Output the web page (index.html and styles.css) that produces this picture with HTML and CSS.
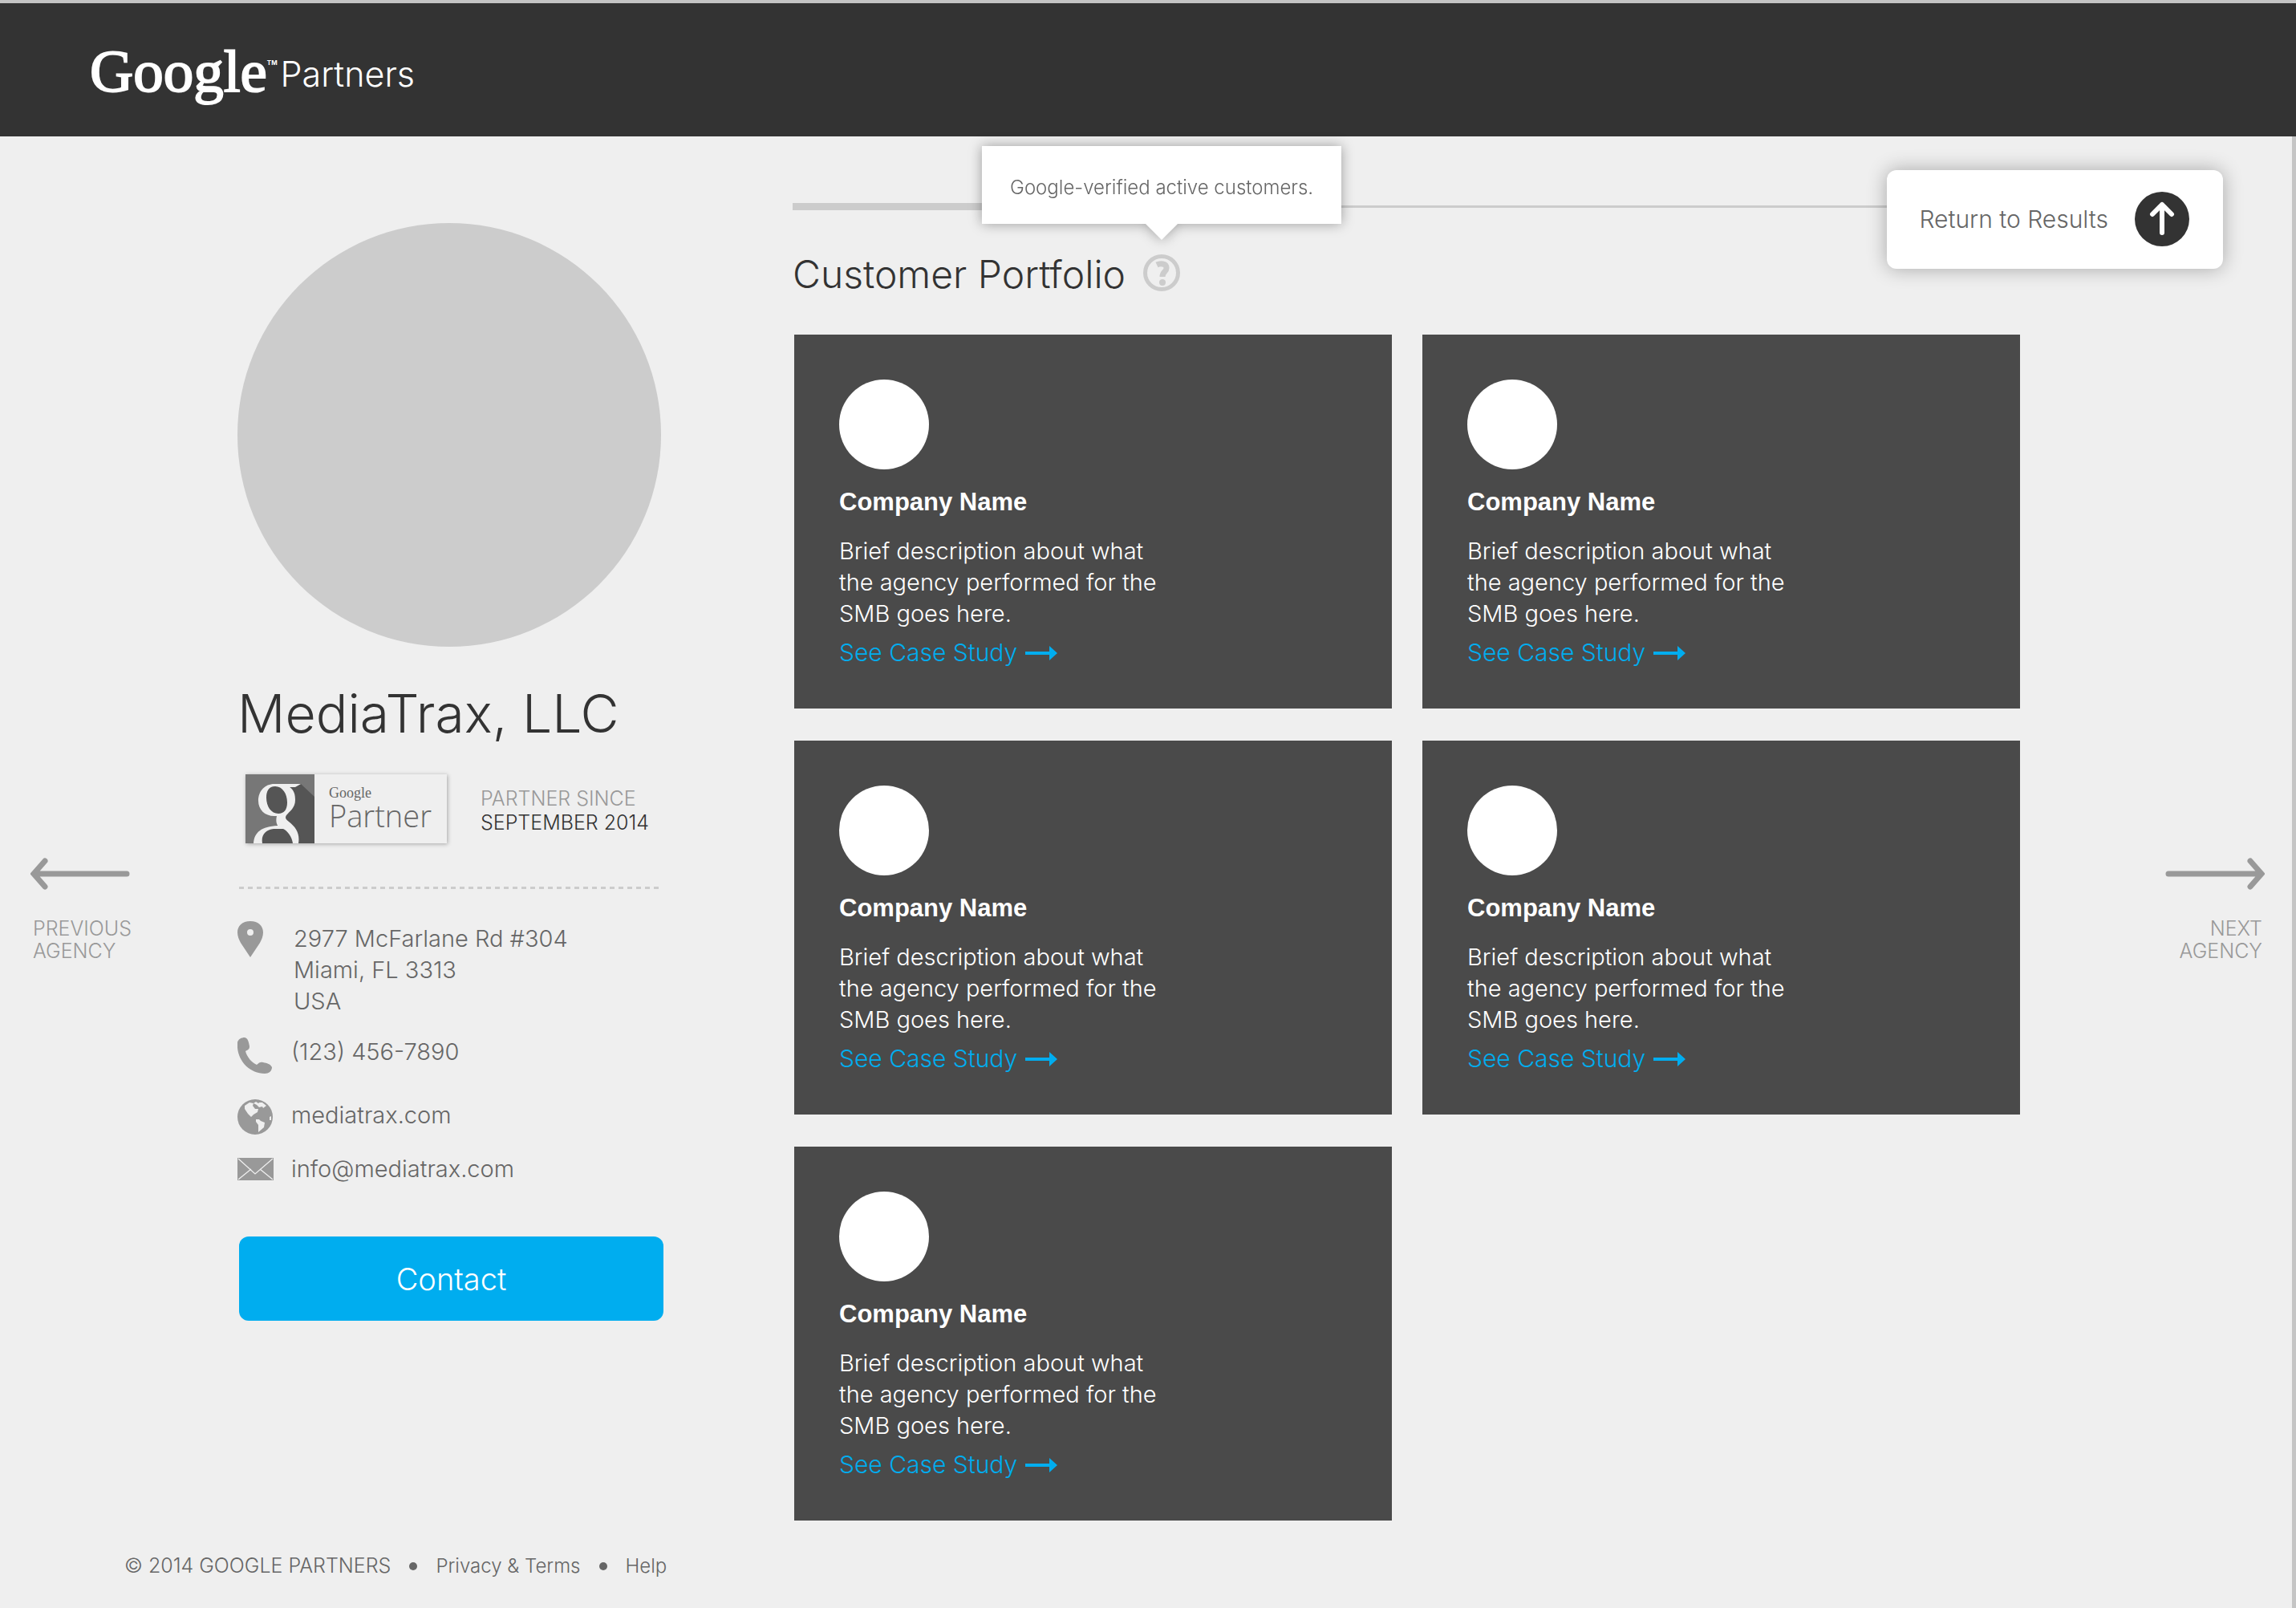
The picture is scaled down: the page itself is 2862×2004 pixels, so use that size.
FILE: index.html
```html
<!DOCTYPE html>
<html lang="en">
<head>
<meta charset="utf-8">
<title>MediaTrax, LLC - Google Partners</title>
<link rel="stylesheet" href="styles.css">
</head>
<body>
<header class="topbar">
  <a class="brand" href="#"><span class="brand-google">Google</span><span class="brand-tm">TM</span><span class="brand-partners">Partners</span></a>
</header>
<div class="page">
  <main class="layout">
    <a class="pager pager-prev" href="#">
      <svg class="pager-arrow" viewBox="0 0 124 40"><path d="M18 4 4 20l14 16M6 20h114" fill="none" stroke="currentColor" stroke-width="7" stroke-linecap="round"/></svg>
      <span class="pager-label">PREVIOUS<br>AGENCY</span>
    </a>
    <aside class="profile">
      <div class="avatar"></div>
      <h1 class="agency">MediaTrax, LLC</h1>
      <div class="credentials">
        <div class="badge">
          <svg class="badge-mark" viewBox="0 0 86 86">
            <path d="M0 0h86v86H0z" fill="#777"/>
            <path d="M69 12 86 28v58H21c-2-12 6-18 14-18l9-10 10-20 2-22z" fill="#555"/>
            <ellipse cx="39" cy="32" rx="15" ry="19" fill="#555"/>
            <path fill-rule="evenodd" d="M36 12h33l-7 4h-7c6 4 7 10 7 16 0 10-7 14-11 19-2 3-1 5 3 8 9 7 14 15 12 27h-7c-1-8-7-16-12-18H35c-10 1-16 8-14 18H10c1-14 10-21 30-22-2-4-2-8-1-12h-3c-12 0-20-8-20-19 0-12 8-21 20-21zm1 3c-8 0-11 6-11 14 0 11 6 20 15 20 7 0 11-5 11-14 0-11-6-20-15-20z" fill="#efefef"/>
          </svg>
          <div class="badge-text"><span class="badge-google">Google</span><span class="badge-partner">Partner</span></div>
        </div>
        <p class="since"><span class="since-label">PARTNER SINCE</span><br>SEPTEMBER 2014</p>
      </div>
      <hr class="dashes">
      <ul class="contacts">
        <li class="contact contact-address">
          <svg class="icon" viewBox="0 0 45 45"><path fill-rule="evenodd" d="M16 0C6 0 0 6 0 14c0 5 2 9 4 13l12 18 12-18c2-4 4-8 4-13C32 6 26 0 16 0zm0 10a4 4 0 1 1 0 8 4 4 0 0 1 0-8z" fill="#999"/></svg>
          <address class="address">2977 McFarlane Rd #304<br>Miami, FL 3313<br>USA</address>
        </li>
        <li class="contact contact-phone">
          <svg class="icon" viewBox="0 0 45 45"><path d="M0 6C1 2 5 0 9 0c4 1 5 5 6 11 0 3-1 4-5 6 2 8 8 14 14 17 3-3 5-4 8-3 5 1 9 2 11 6 0 5-4 8-9 8C14 45-2 27 0 6z" fill="#999"/></svg>
          <a class="contact-link" href="#">(123) 456-7890</a>
        </li>
        <li class="contact contact-web">
          <svg class="icon" viewBox="0 0 45 45"><circle cx="22" cy="22" r="22" fill="#999"/><path d="M9 8l6-4 5 1-1 3 3 4h4l-1 4-5 3-3 3-4-4-4-6zM20 5l3-2 3 2 4 0 1 4-4 1-3-3zM26 4l5 0 5 4-4 3-2-4zM23 25h4l2 2 5 2-1 6-7 6 0-9-3-4zM40 22l2-1v5h-2z" fill="#efefef"/></svg>
          <a class="contact-link" href="#">mediatrax.com</a>
        </li>
        <li class="contact contact-mail">
          <svg class="icon icon-mail" viewBox="0 0 45 28"><path d="M0 0h45v28H0z" fill="#999"/><path d="M1 1l21 19L44 1M1 27l16-13M44 27 28 14" fill="none" stroke="#efefef" stroke-width="1.300"/></svg>
          <a class="contact-link" href="#">info@mediatrax.com</a>
        </li>
      </ul>
      <button class="contact-button" type="button">Contact</button>
    </aside>
    <section class="portfolio">
      <div class="rule"><div class="rule-progress"></div></div>
      <div class="portfolio-head">
        <h2 class="portfolio-title">Customer Portfolio</h2>
        <div class="help">
          <svg class="help-icon" viewBox="0 0 46 46"><circle cx="23" cy="23" r="20.500" fill="none" stroke="#ccc" stroke-width="5"/><path d="M17 13c4-2 12-2 12 4 0 5-5 4-5 11" fill="none" stroke="#ccc" stroke-width="7"/><circle cx="24" cy="35" r="4" fill="#ccc"/></svg>
          <div class="tooltip" role="tooltip">Google-verified active customers.</div>
        </div>
      </div>
      <div class="cards">
        <article class="card">
          <div class="card-logo"></div>
          <h3 class="card-name">Company Name</h3>
          <p class="card-text">Brief description about what the agency performed for the SMB goes here.</p>
          <a class="card-link" href="#">See Case Study<svg class="card-arrow" viewBox="0 0 40 18"><path d="M0 7h30V0l10 9-10 9v-7H0z" fill="currentColor"/></svg></a>
        </article>
        <article class="card">
          <div class="card-logo"></div>
          <h3 class="card-name">Company Name</h3>
          <p class="card-text">Brief description about what the agency performed for the SMB goes here.</p>
          <a class="card-link" href="#">See Case Study<svg class="card-arrow" viewBox="0 0 40 18"><path d="M0 7h30V0l10 9-10 9v-7H0z" fill="currentColor"/></svg></a>
        </article>
        <article class="card">
          <div class="card-logo"></div>
          <h3 class="card-name">Company Name</h3>
          <p class="card-text">Brief description about what the agency performed for the SMB goes here.</p>
          <a class="card-link" href="#">See Case Study<svg class="card-arrow" viewBox="0 0 40 18"><path d="M0 7h30V0l10 9-10 9v-7H0z" fill="currentColor"/></svg></a>
        </article>
        <article class="card">
          <div class="card-logo"></div>
          <h3 class="card-name">Company Name</h3>
          <p class="card-text">Brief description about what the agency performed for the SMB goes here.</p>
          <a class="card-link" href="#">See Case Study<svg class="card-arrow" viewBox="0 0 40 18"><path d="M0 7h30V0l10 9-10 9v-7H0z" fill="currentColor"/></svg></a>
        </article>
        <article class="card">
          <div class="card-logo"></div>
          <h3 class="card-name">Company Name</h3>
          <p class="card-text">Brief description about what the agency performed for the SMB goes here.</p>
          <a class="card-link" href="#">See Case Study<svg class="card-arrow" viewBox="0 0 40 18"><path d="M0 7h30V0l10 9-10 9v-7H0z" fill="currentColor"/></svg></a>
        </article>
      </div>
    </section>
    <a class="pager pager-next" href="#">
      <svg class="pager-arrow" viewBox="0 0 124 40"><path d="m106 4 14 16-14 16M118 20H4" fill="none" stroke="currentColor" stroke-width="7" stroke-linecap="round"/></svg>
      <span class="pager-label">NEXT<br>AGENCY</span>
    </a>
    <a class="return" href="#">Return to Results
      <svg class="return-icon" viewBox="0 0 68 68"><circle cx="34" cy="34" r="34" fill="#333"/><path d="M34 51V16M22 28l12-12 12 12" fill="none" stroke="#fff" stroke-width="6" stroke-linecap="round" stroke-linejoin="round"/></svg>
    </a>
  </main>
  <footer class="footer">
    <span>© 2014 GOOGLE PARTNERS</span><span class="dot"></span><a class="footer-link" href="#">Privacy &amp; Terms</a><span class="dot"></span><a class="footer-link" href="#">Help</a>
  </footer>
</div>
</body>
</html>
```
FILE: styles.css
```css
* {
  box-sizing: border-box;
}

body {
  margin: 0;
  background: #efefef;
  color: #666;
  font-family: Inter, "Liberation Sans", Arial, sans-serif;
  font-size: 29px;
  font-weight: 300;
  line-height: 39px;
}

a {
  color: inherit;
  text-decoration: none;
}

h1, h2, h3, p, ul {
  margin: 0;
  padding: 0;
  font-weight: 300;
}

svg {
  display: block;
  flex: none;
}

.topbar {
  height: 170px;
  padding: 44px 112px 0;
  border-top: 4px solid #c4c4c4;
  background: #333;
}

.brand {
  display: inline-flex;
  align-items: flex-start;
  color: #fff;
}

.brand-google {
  font-family: "Liberation Serif", serif;
  font-size: 75px;
  font-weight: 400;
  line-height: 82px;
  -webkit-text-stroke: 2px #fff;
}

.brand-tm {
  margin-top: 20px;
  font-size: 8px;
  font-weight: 700;
  line-height: 20px;
}

.brand-partners {
  margin: 19px 0 0 4px;
  font-size: 43px;
  line-height: 50px;
}

.page {
  min-height: calc(100vh - 170px);
  border-right: 5px solid #c5c5c5;
}

.layout {
  position: relative;
  display: grid;
  grid-template-columns: 258px 531px minmax(0, 1fr) 305px;
  padding: 1px 34px 0 38px;
}

.pager {
  display: flex;
  flex-direction: column;
  gap: 34px;
  margin-top: 898px;
  align-self: start;
  color: #999;
  font-size: 25px;
  line-height: 28px;
}

.pager-arrow {
  width: 124px;
  height: 40px;
}

.pager-prev .pager-label {
  padding-left: 3px;
}

.pager-next {
  align-items: flex-end;
  text-align: right;
}

.pager-next .pager-label {
  padding-right: 3px;
}

.profile {
  padding-top: 107px;
}

.avatar {
  width: 528px;
  height: 528px;
  border-radius: 50%;
  background: #ccc;
}

.agency {
  margin-top: 45px;
  color: #333;
  font-size: 66px;
  line-height: 76px;
}

.credentials {
  display: flex;
  gap: 42px;
  margin-top: 38px;
  padding-left: 10px;
}

.badge {
  display: flex;
  width: 251px;
  height: 86px;
  box-shadow: 1px 1px 5px rgba(0, 0, 0, 0.3);
}

.badge-mark {
  width: 86px;
  height: 86px;
}

.badge-text {
  display: flex;
  flex-direction: column;
  padding: 13px 0 0 18px;
}

.badge-google {
  font-family: "Liberation Serif", serif;
  font-size: 18px;
  font-weight: 400;
  line-height: 20px;
}

.badge-partner {
  font-family: "Open Sans", sans-serif;
  font-size: 38px;
  line-height: 37px;
}

.since {
  padding-top: 15px;
  color: #333;
  font-size: 25px;
  line-height: 30px;
}

.since-label {
  color: #999;
}

.dashes {
  height: 3px;
  margin: 54px 4px 0 2px;
  border: 0;
  background: repeating-linear-gradient(90deg, #ccc 0 6px, transparent 6px 11px);
}

.contacts {
  display: flex;
  flex-direction: column;
  margin-top: 40px;
  list-style: none;
}

.contact {
  display: flex;
  align-items: flex-start;
  gap: 22px;
}

.contact-address {
  gap: 25px;
}

.contact-phone {
  margin-top: 26px;
}

.contact-web {
  margin-top: 32px;
}

.contact-mail {
  align-items: center;
  margin-top: 22px;
}

.icon {
  width: 45px;
  height: 45px;
}

.icon-mail {
  height: 28px;
}

.address {
  padding-top: 2px;
  font-style: normal;
}

.contact-phone {
  line-height: 36px;
}

.contact-button {
  display: block;
  width: 529px;
  height: 105px;
  margin: 65px 0 0 2px;
  border: 0;
  border-radius: 12px;
  background: #00adef;
  color: #fff;
  font-family: inherit;
  font-size: 38px;
  font-weight: 300;
}

.portfolio {
  padding: 82px 0 0 161px;
}

.rule {
  height: 9px;
  background: linear-gradient(#ccc, #ccc) center / 100% 3px no-repeat;
}

.rule-progress {
  width: 20%;
  height: 9px;
  background: #ccc;
}

.portfolio-head {
  display: flex;
  align-items: center;
  gap: 22px;
  margin: 46px 0 45px;
}

.portfolio-title {
  padding-top: 4px;
  color: #333;
  font-size: 48px;
  line-height: 60px;
}

.help {
  position: relative;
}

.help-icon {
  width: 46px;
  height: 46px;
}

.tooltip {
  position: absolute;
  bottom: 84px;
  left: 50%;
  padding: 32px 35px 26px;
  transform: translateX(-50%);
  background: #fff;
  filter: drop-shadow(0 0 8px rgba(0, 0, 0, 0.35));
  font-size: 24px;
  white-space: nowrap;
}

.tooltip::after {
  position: absolute;
  top: 100%;
  left: 50%;
  border: 20px solid transparent;
  border-bottom: 0;
  border-top-color: #fff;
  transform: translateX(-50%);
  content: "";
}

.cards {
  display: grid;
  grid-template-columns: repeat(2, minmax(0, 1fr));
  gap: 40px 38px;
  padding-left: 2px;
}

.card {
  min-height: 466px;
  padding: 56px 56px 48px;
  background: #4a4a4a;
  color: #fff;
}

.card-logo {
  width: 112px;
  height: 112px;
  border-radius: 50%;
  background: #fff;
}

.card-name {
  margin-top: 21px;
  font-family: "Liberation Sans", Arial, sans-serif;
  font-size: 31px;
  font-weight: 700;
}

.card-text {
  max-width: 420px;
  margin-top: 22px;
}

.card-link {
  display: inline-flex;
  align-items: center;
  gap: 10px;
  margin-top: 10px;
  color: #00adef;
  font-size: 30px;
}

.card-arrow {
  width: 40px;
  height: 18px;
}

.return {
  position: absolute;
  top: 42px;
  right: 86px;
  display: flex;
  align-items: center;
  gap: 33px;
  padding: 27px 42px 28px 40px;
  border-radius: 12px;
  background: #fff;
  box-shadow: 0 0 24px rgba(0, 0, 0, 0.3);
  font-size: 30px;
}

.return-icon {
  width: 68px;
  height: 68px;
}

.footer {
  display: flex;
  align-items: center;
  gap: 23px;
  padding: 37px 155px 33px;
  font-size: 25px;
}

.footer-link {
  font-size: 24px;
}

.dot {
  width: 10px;
  height: 10px;
  border-radius: 50%;
  background: #666;
}
```
